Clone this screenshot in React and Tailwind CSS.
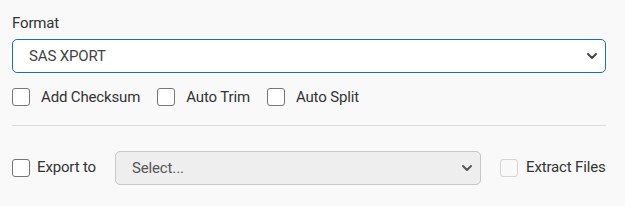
import { ChevronDown } from 'lucide-react';

function Box({ disabled }) {
  return (
    <span
      className={
        'inline-block h-[18px] w-[18px] shrink-0 rounded-[3px] border ' +
        (disabled ? 'border-[#d4d4d4] bg-[#f9f9f9]' : 'border-[#767676] bg-white')
      }
    />
  );
}

function Check({ label, className = '' }) {
  return (
    <label className={'flex items-center gap-[11px] ' + className}>
      <Box />
      <span>{label}</span>
    </label>
  );
}

export default function App() {
  return (
    <div className="min-h-screen bg-[#f9f9f9] px-3 pt-[13px] text-[15px] leading-5 tracking-[-0.15px] text-[#333] font-['Roboto',sans-serif]">
      {/* Format */}
      <div className="mb-[6px]">Format</div>
      <div className="flex h-[34px] w-[594px] items-center justify-between rounded-[5px] border border-[#1f6fae] bg-white pl-4 pr-[5px] text-[#444]">
        <span>SAS XPORT</span>
        <ChevronDown size={16} strokeWidth={3} className="text-[#444]" />
      </div>

      {/* Options */}
      <div className="mt-[14px] flex items-center">
        <Check label="Add Checksum" />
        <Check label="Auto Trim" className="ml-[17px]" />
        <Check label="Auto Split" className="ml-[17px]" />
      </div>

      <div className="mt-[18px] w-[594px] border-t border-[#dddddd]" />

      {/* Export */}
      <div className="mt-[25px] flex items-center">
        <label className="flex items-center gap-[7px]">
          <Box />
          <span className="-mt-[2px]">Export to</span>
        </label>
        <div className="ml-[19px] flex h-[34px] w-[366px] items-center justify-between rounded-[5px] border border-[#c8c8c8] bg-[#eeeeee] pl-4 pr-[5px] text-[#555]">
          <span>Select...</span>
          <ChevronDown size={16} strokeWidth={3} className="text-[#555]" />
        </div>
        <label className="ml-[19px] flex items-center gap-2">
          <Box disabled />
          <span className="-mt-[2px]">Extract Files</span>
        </label>
      </div>
    </div>
  );
}
